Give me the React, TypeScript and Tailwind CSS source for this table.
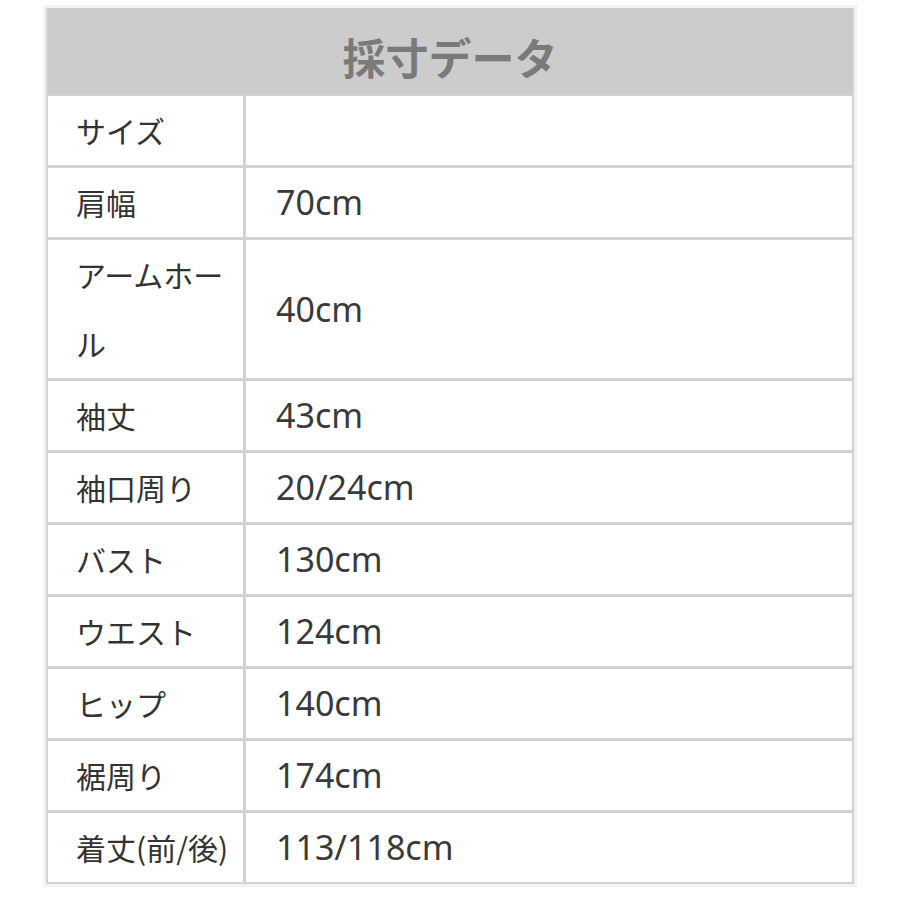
const rows: { label: string; value: string }[] = [
  { label: 'サイズ', value: '' },
  { label: '肩幅', value: '70cm' },
  { label: 'アームホール', value: '40cm' },
  { label: '袖丈', value: '43cm' },
  { label: '袖口周り', value: '20/24cm' },
  { label: 'バスト', value: '130cm' },
  { label: 'ウエスト', value: '124cm' },
  { label: 'ヒップ', value: '140cm' },
  { label: '裾周り', value: '174cm' },
  { label: '着丈(前/後)', value: '113/118cm' },
];

export default function App() {
  return (
    <div className="w-[900px] h-[900px] bg-white pt-[8px] pl-[46px]">
      <div className="w-[808px] border-[2px] border-[#d2d2d2] border-t-0 shadow-[0_0_0_3px_#f2f2f2]">
        <div className="h-[86px] bg-[#cccccc] flex items-center justify-center pt-[10px]">
          <span
            className="text-[43px] font-bold text-[#7a7a7a]"
            style={{ fontFamily: '"Noto Sans CJK JP", sans-serif' }}
          >
            採寸データ
          </span>
        </div>
        {rows.map((r, i) => (
          <div key={i} className={`flex border-[#d2d2d2] ${i === 0 ? 'border-t-[2px]' : 'border-t-[3px]'}`}>
            <div
              className="w-[198px] shrink-0 border-r-[3px] border-[#d2d2d2] pl-[28px] pr-[2px] text-[30px] leading-[69px] text-[#333333]"
              style={{ fontFamily: '"Noto Sans CJK JP", sans-serif' }}
            >
              {r.label}
            </div>
            <div
              className="flex-1 flex items-center pl-[30px] text-[34px] text-[#3a3a3a]"
              style={{ fontFamily: '"Noto Sans", "Noto Sans CJK JP", sans-serif' }}
            >
              {r.value}
            </div>
          </div>
        ))}
      </div>
    </div>
  );
}
